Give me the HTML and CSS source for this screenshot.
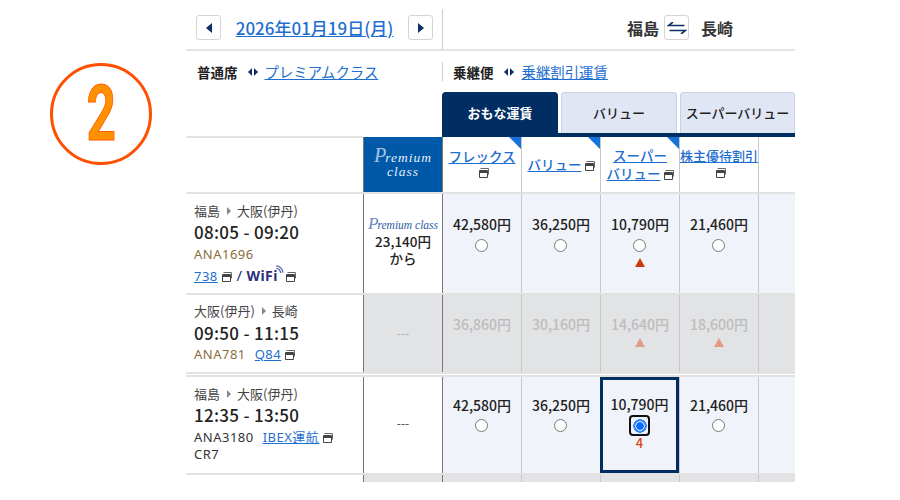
FILE: index.html
```html
<!DOCTYPE html>
<html lang="ja">
<head>
  <meta charset="UTF-8">
  <title>運賃選択</title>
  <link rel="stylesheet" href="styles.css">
</head>
<body>
  <svg class="defs" width="0" height="0">
    <symbol id="win" viewBox="0 0 10 10">
      <path d="M1.500.5h8v6" fill="none" stroke="#666" stroke-width="1"/>
      <path d="M.5 2.500h8v7h-8z" fill="none" stroke="#444" stroke-width="1"/>
      <path d="M1 3h7v2H1z" fill="#444"/>
    </symbol>
  </svg>

  <div class="page">
    <div class="step-col">
      <div class="step-circle"><span>2</span></div>
    </div>

    <div class="main">
      <!-- date and route -->
      <div class="top-bar">
        <div class="date-box">
          <button class="arrow-btn"><span class="tri-left"></span></button>
          <a href="#" class="date-link">2026年01月19日(月)</a>
          <button class="arrow-btn"><span class="tri-right"></span></button>
        </div>
        <div class="route-box">
          <span>福島</span>
          <button class="swap-btn">
            <svg width="20" height="12" viewBox="0 0 20 12"><path d="M6 0L1.500 3.500h16M14 12l4.500-3.500h-16" fill="none" stroke="#0c2f66" stroke-width="1.600"/></svg>
          </button>
          <span>長崎</span>
        </div>
      </div>

      <div class="switch-bar">
        <div class="switch-left">
          <b>普通席</b><span class="tri-pair"><i class="s-left"></i><i class="s-right"></i></span><a href="#">プレミアムクラス</a>
        </div>
        <div class="switch-right">
          <b>乗継便</b><span class="tri-pair"><i class="s-left"></i><i class="s-right"></i></span><a href="#">乗継割引運賃</a>
        </div>
      </div>

      <div class="tabs">
        <div class="tab active">おもな運賃</div>
        <div class="tab">バリュー</div>
        <div class="tab">スーパーバリュー</div>
      </div>

      <!-- fare table -->
      <div class="fare-row head-row">
        <div class="info"></div>
        <div class="cell premium-head"><span class="pc-logo"><em>P</em>remium<br>class</span></div>
        <div class="cell fare-head corner"><a href="#">フレックス</a><svg class="win"><use href="#win"/></svg></div>
        <div class="cell fare-head corner one-line"><span><a href="#">バリュー</a> <svg class="win"><use href="#win"/></svg></span></div>
        <div class="cell fare-head corner two-line"><a href="#">スーパー</a><span><a href="#">バリュー</a> <svg class="win"><use href="#win"/></svg></span></div>
        <div class="cell fare-head tight"><a href="#">株主優待割引</a><svg class="win"><use href="#win"/></svg></div>
        <div class="cell"></div>
      </div>

      <div class="fare-row row-a">
        <div class="info">
          <div class="route">福島<i class="s-right gray"></i>大阪(伊丹)</div>
          <div class="time">08:05 - 09:20</div>
          <div class="flight tan">ANA1696</div>
          <div class="flight"><a href="#">738</a> <svg class="win"><use href="#win"/></svg> <span class="slash">/</span> <span class="wifi">WiFi</span><svg class="wifi-arc" width="9" height="9" viewBox="0 0 8 8"><path d="M1 3a4 4 0 0 1 4 4M1 .8a6 6 0 0 1 6 6" fill="none" stroke="#5b6bb0" stroke-width="1.200"/></svg><svg class="win"><use href="#win"/></svg></div>
        </div>
        <div class="cell premium-cell"><span class="pc-small"><em>P</em>remium class</span><b>23,140円</b><b>から</b></div>
        <div class="cell price"><b>42,580円</b><input type="radio" name="a"></div>
        <div class="cell price"><b>36,250円</b><input type="radio" name="a"></div>
        <div class="cell price"><b>10,790円</b><input type="radio" name="a"><span class="seat-tri"></span></div>
        <div class="cell price"><b>21,460円</b><input type="radio" name="a"></div>
        <div class="cell price"></div>
      </div>

      <div class="fare-row row-b">
        <div class="info">
          <div class="route">大阪(伊丹)<i class="s-right gray"></i>長崎</div>
          <div class="time">09:50 - 11:15</div>
          <div class="flight tan">ANA781 <a href="#" class="plane">Q84</a> <svg class="win"><use href="#win"/></svg></div>
        </div>
        <div class="cell off dash">---</div>
        <div class="cell off price"><b>36,860円</b></div>
        <div class="cell off price"><b>30,160円</b></div>
        <div class="cell off price"><b>14,640円</b><span class="seat-tri"></span></div>
        <div class="cell off price"><b>18,600円</b><span class="seat-tri"></span></div>
        <div class="cell off"></div>
      </div>

      <div class="fare-row row-c">
        <div class="info">
          <div class="route">福島<i class="s-right gray"></i>大阪(伊丹)</div>
          <div class="time">12:35 - 13:50</div>
          <div class="flight">ANA3180 <a href="#" class="plane">IBEX運航</a> <svg class="win"><use href="#win"/></svg></div>
          <div class="flight craft">CR7</div>
        </div>
        <div class="cell dash">---</div>
        <div class="cell price"><b>42,580円</b><input type="radio" name="c"></div>
        <div class="cell price"><b>36,250円</b><input type="radio" name="c"></div>
        <div class="cell price selected"><b>10,790円</b><span class="focus-ring"><input type="radio" name="c" checked></span><span class="seats">4</span></div>
        <div class="cell price"><b>21,460円</b><input type="radio" name="c"></div>
        <div class="cell price"></div>
      </div>

      <div class="fare-row row-d">
        <div class="info"></div>
        <div class="cell off"></div>
        <div class="cell off"></div>
        <div class="cell off"></div>
        <div class="cell off"></div>
        <div class="cell off"></div>
        <div class="cell off"></div>
      </div>
    </div>
  </div>
</body>
</html>
```

FILE: styles.css
```css
/* General */
html, body {
  margin: 0;
  padding: 0;
  background: #fff;
}

body {
  font-family: "Noto Sans CJK JP", "Noto Sans", sans-serif;
  color: #222;
  overflow: hidden;
}

a {
  color: #1f6fd0;
  text-decoration: underline;
}

.defs {
  display: block;
  height: 0;
}

.page {
  display: flex;
  height: 482px;
  overflow: hidden;
}

/* Step number */
.step-col {
  width: 186px;
  flex: none;
  padding: 63px 0 0 50px;
  box-sizing: border-box;
}

.step-circle {
  width: 102px;
  height: 102px;
  box-sizing: border-box;
  border: 3px solid #ff4f00;
  border-radius: 50%;
  display: flex;
  align-items: center;
  justify-content: center;
}

.step-circle span {
  font-family: "Roboto", sans-serif;
  font-size: 78px;
  line-height: 1;
  font-weight: 700;
  color: #ff9000;
  -webkit-text-stroke: 1px #ff5a00;
  transform: scaleX(0.66);
}

.main {
  width: 609px;
  flex: none;
}

/* Date and route bar */
.top-bar {
  display: flex;
  height: 40px;
  margin-top: 9px;
  border-bottom: 2px solid #e4e4e4;
}

.date-box {
  width: 257px;
  display: flex;
  align-items: center;
  box-sizing: border-box;
  padding: 0 9px 3px 10px;
  justify-content: space-between;
  border-right: 1px solid #ccc;
}

.arrow-btn, .swap-btn {
  width: 25px;
  height: 25px;
  padding: 0;
  background: #fff;
  border: 1px solid #d4d4d4;
  border-radius: 3px;
  display: flex;
  align-items: center;
  justify-content: center;
}

.tri-left, .s-left {
  width: 0;
  height: 0;
  border-style: solid;
  border-color: transparent #0c2f66 transparent transparent;
}

.tri-right, .s-right {
  width: 0;
  height: 0;
  border-style: solid;
  border-color: transparent transparent transparent #0c2f66;
}

.tri-left {
  border-width: 5px 6px 5px 0;
}

.tri-right {
  border-width: 5px 0 5px 6px;
}

.date-link {
  font-size: 17px;
  font-weight: 500;
  color: #1f6fd0;
}

.route-box {
  flex: 1;
  display: flex;
  align-items: center;
  gap: 5px;
  padding: 0 0 3px 184px;
  font-size: 16px;
  font-weight: 700;
  color: #333;
}

.swap-btn {
  margin-right: 7px;
}

/* Seat switch */
.switch-bar {
  display: flex;
  height: 41px;
  font-size: 14.400px;
}

.switch-left {
  width: 257px;
  box-sizing: border-box;
  height: 19px;
  margin-top: 11px;
  padding-left: 11px;
  display: flex;
  align-items: center;
  border-right: 1px solid #ccc;
}

.switch-right {
  padding-left: 10px;
  margin-top: 11px;
  height: 19px;
  display: flex;
  align-items: center;
}

.switch-bar b {
  font-weight: 700;
  font-size: 13.500px;
}

.tri-pair {
  display: inline-flex;
  gap: 2px;
  margin: 0 7px 0 10px;
}

.switch-right a {
  margin-left: 1px;
}

.s-left {
  display: block;
  border-width: 4px 4px 4px 0;
}

.s-right {
  display: block;
  border-width: 4px 0 4px 4px;
}

/* Tabs */
.tabs {
  display: flex;
  gap: 3px;
  margin-left: 256px;
  height: 45px;
  box-sizing: border-box;
  border-bottom: 4px solid #002d62;
}

.tab {
  width: 116px;
  box-sizing: border-box;
  padding-bottom: 2px;
  display: flex;
  align-items: center;
  justify-content: center;
  background: #e1e6f5;
  border: 1px solid #c9cfe4;
  border-bottom: 0;
  border-radius: 4px 4px 0 0;
  font-size: 13px;
  font-weight: 500;
  color: #222;
  white-space: nowrap;
}

.tab:last-child {
  width: 115px;
}

.tab.active {
  background: #002d62;
  border-color: #002d62;
  color: #fff;
  font-weight: 700;
}

/* Fare rows */
.fare-row {
  display: grid;
  grid-template-columns: 177px 79px 79px 79px 79px 79px 37px;
  border-bottom: 2px solid #e2e2e2;
  box-sizing: border-box;
}

.head-row {
  height: 57px;
}

.head-row .info {
  margin-top: -1px;
  border-top: 2px solid #e2e2e2;
}

.row-a {
  height: 101px;
}

.row-b {
  height: 79px;
  margin-bottom: 1px;
}

.row-c {
  height: 100px;
  border-top: 2px solid #e2e2e2;
}

.row-d {
  height: 10px;
  border-bottom: 0;
}

.cell {
  border-left: 1px solid #c8c8c8;
  box-sizing: border-box;
  display: flex;
  flex-direction: column;
  align-items: center;
  position: relative;
}

.fare-row > .cell:nth-child(2),
.fare-row > .cell:nth-child(3) {
  border-left-color: #777;
}

.info {
  padding: 8px 0 0 8px;
  font-size: 12px;
  line-height: 18px;
  color: #444;
}

.row-b .info {
  padding-top: 7px;
}

.route {
  display: flex;
  align-items: center;
  font-size: 13px;
}

.route .gray {
  border-left-color: #888;
  margin: 0 6px 0 7px;
}

.time {
  font-size: 17px;
  font-weight: 500;
  line-height: 24px;
  letter-spacing: 0.3px;
  color: #222;
}

.row-b .time {
  line-height: 26px;
}

.flight {
  font-family: "Noto Sans", "Noto Sans CJK JP", sans-serif;
  font-size: 13px;
  letter-spacing: 0.5px;
  line-height: 21px;
  color: #333;
}

.flight.tan {
  color: #8a6d3b;
}

.row-b .flight {
  margin-top: -2px;
}

.flight.craft {
  margin-top: -4px;
}

.flight .plane {
  margin-left: 5px;
}

.win {
  width: 10px;
  height: 10px;
  vertical-align: -1px;
}

.slash {
  font-size: 15px;
  color: #2b2f80;
  margin-left: 1px;
}

.wifi {
  font-weight: 700;
  font-size: 14px;
  letter-spacing: 0.4px;
  color: #2b2f80;
}

.wifi-arc {
  vertical-align: 7px;
  margin: 0 2px 0 -3px;
}

/* Header cells */
.premium-head {
  background: #0058a8;
  justify-content: center;
}

.pc-logo {
  font-family: "Liberation Serif", serif;
  font-style: italic;
  color: #e6eef8;
  font-size: 13.500px;
  line-height: 14px;
  letter-spacing: 1px;
  text-align: center;
}

.pc-logo em, .pc-small em {
  font-size: 1.500em;
  font-weight: 400;
  line-height: 0;
  letter-spacing: -1px;
  opacity: 0.7;
}

.fare-head {
  justify-content: center;
  padding-bottom: 5px;
  font-size: 13.500px;
  font-weight: 500;
  line-height: 18px;
  text-align: center;
  white-space: nowrap;
}

.fare-head .win {
  display: inline-block;
}

.fare-head > .win {
  margin: 3px 0 0 4px;
}

.fare-head.one-line {
  padding-bottom: 2px;
}

.fare-head.two-line {
  padding: 0 0 1px;
}

.fare-head.tight {
  font-size: 13px;
}

.corner::after {
  content: "";
  position: absolute;
  top: 0;
  right: 0;
  border-style: solid;
  border-width: 0 12px 12px 0;
  border-color: transparent #1572d8 transparent transparent;
}

/* Price cells */
.price {
  background: #f0f3f9;
  padding-top: 21px;
  font-size: 14px;
  line-height: 18px;
}

.price b {
  font-weight: 500;
  color: #222;
}

.price input {
  margin: 6px 1px 0 0;
  width: 13px;
  height: 13px;
}

.row-c .price {
  padding-top: 19px;
}

.row-c .price input {
  margin-top: 5px;
}

.seat-tri {
  margin-top: 6px;
  border-style: solid;
  border-width: 0 5px 9px 5px;
  border-color: transparent transparent #c93a12 transparent;
}

.premium-cell {
  padding-top: 23px;
  font-size: 13.500px;
  line-height: 17px;
}

.premium-cell b {
  font-weight: 500;
}

.pc-small {
  font-family: "Liberation Serif", serif;
  font-style: italic;
  font-size: 11.500px;
  line-height: 16px;
  color: #2a5aa8;
  white-space: nowrap;
}

.dash {
  justify-content: center;
  font-size: 12px;
  color: #444;
  padding-bottom: 6px;
}

.off {
  background: #e2e3e5;
}

.off.dash {
  color: #b0b0b0;
  padding-bottom: 3px;
}

.off.price {
  padding-top: 20px;
}

.off.price b {
  color: #bcbcbc;
}

.off .seat-tri {
  margin-top: 5px;
  border-bottom-color: #e09a85;
}

.row-c .selected {
  border: 3px solid #002d62;
  padding-top: 15px;
}

/* Focused radio */
.focus-ring {
  width: 21px;
  height: 21px;
  box-sizing: border-box;
  margin-top: 2px;
  border: 2.500px solid #111;
  border-radius: 4px;
  display: flex;
  align-items: center;
  justify-content: center;
}

.row-c .focus-ring input {
  appearance: none;
  margin: 0;
  width: 14px;
  height: 14px;
  background: radial-gradient(circle, #0a6cff 0 3.500px, #cfe2ff 4px 4.500px, #2f86ff 5px 6.500px, transparent 7px);
}

.seats {
  font-size: 13px;
  line-height: 14px;
  font-weight: 500;
  color: #d9480f;
  margin-top: 0;
}
```
